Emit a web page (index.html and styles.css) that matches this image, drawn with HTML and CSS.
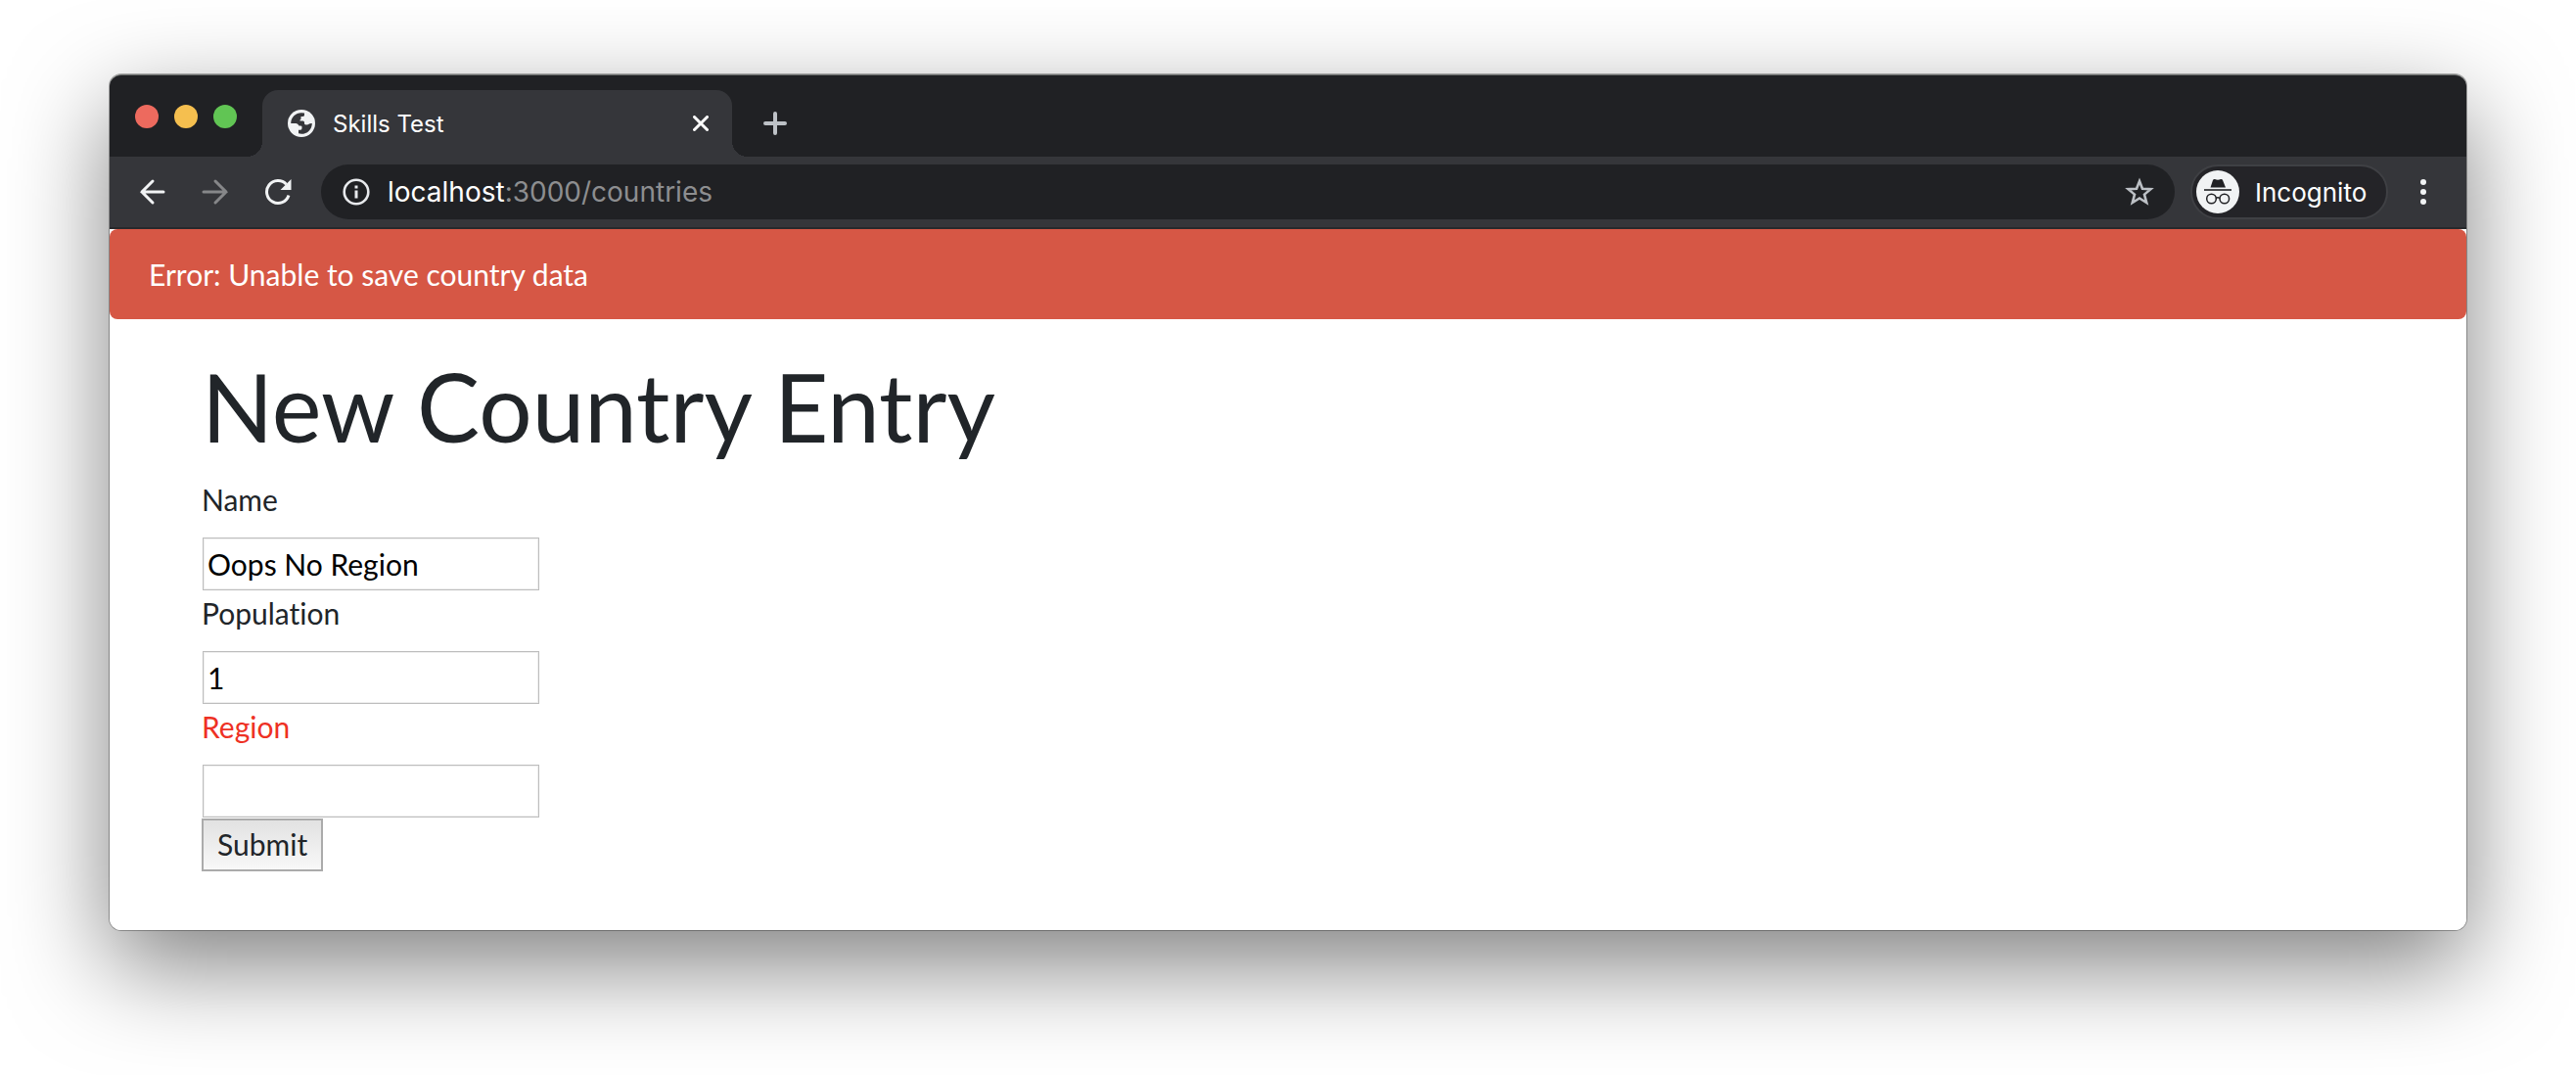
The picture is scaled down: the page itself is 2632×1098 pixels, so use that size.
FILE: index.html
```html
<!DOCTYPE html>
<html lang="en">
<head>
<meta charset="utf-8">
<title>Skills Test</title>
<link rel="stylesheet" href="styles.css">
</head>
<body>
<div class="window">
  <header class="tabstrip">
    <div class="lights">
      <span class="light light-close"></span>
      <span class="light light-min"></span>
      <span class="light light-max"></span>
    </div>
    <div class="tab">
      <svg class="globe" viewBox="0 0 28 28" aria-hidden="true"><circle cx="14" cy="14" r="14" fill="#f1f3f4"/><path d="M3.200 14A10.800 10.800 0 0 1 14 3.200L17 3.600V5.500Q17 7 15 7H13.500V9Q13.500 10 12.500 10.500V11.500H15.500Q17 11.500 17 13V14.500Q17.500 15.500 19 15.500Q21 15.500 22 14.500Q23 13.800 24.800 14A10.800 10.800 0 0 1 14 24.800L11 24.300V20.800H13Q14.500 20.800 14.500 19V17.500Q14.500 16.500 13 16.500H11.500Q10.500 14 8.500 14Z" fill="#35363a"/></svg>
      <span class="tab-title">Skills Test</span>
      <button class="icon-button tab-close" aria-label="Close tab"><svg viewBox="0 0 16 16" width="16" height="16"><path d="M1.500 1.500 14.500 14.500 M14.500 1.500 1.500 14.500" stroke="#fff" stroke-width="3" stroke-linecap="round"/></svg></button>
    </div>
    <button class="icon-button new-tab" aria-label="New tab"><svg viewBox="0 0 24 24" width="24" height="24"><path d="M12 2V22M2 12H22" stroke="#bdc1c6" stroke-width="4" stroke-linecap="round"/></svg></button>
  </header>
  <nav class="toolbar">
    <div class="nav-buttons">
      <button class="icon-button" aria-label="Back"><svg viewBox="0 0 28 28" width="28" height="28"><path d="M25 14H3M14 3 3 14 14 25" fill="none" stroke="#f1f3f4" stroke-width="3" stroke-linecap="round"/></svg></button>
      <button class="icon-button" aria-label="Forward"><svg viewBox="0 0 28 28" width="28" height="28"><path d="M2 14H25M14 3 25 14 14 25" fill="none" stroke="#868789" stroke-width="3" stroke-linecap="round"/></svg></button>
      <button class="icon-button" aria-label="Reload"><svg viewBox="0 0 28 28" width="28" height="28"><path d="M22.500 6.200A11.500 11.500 0 1 0 25 17.500" fill="none" stroke="#f1f3f4" stroke-width="3"/><path d="M27.500 1V12H16.500Z" fill="#f1f3f4"/></svg></button>
    </div>
    <div class="address">
      <svg viewBox="0 0 28 28" width="28" height="28" aria-hidden="true"><circle cx="14" cy="14" r="12.300" fill="none" stroke="#e8eaed" stroke-width="2.600"/><path d="M12.500 7.500h3v3h-3zM12.500 12.500h3v8h-3z" fill="#e8eaed"/></svg>
      <span class="url"><span class="host">localhost</span>:3000/countries</span>
      <button class="icon-button" aria-label="Bookmark"><svg viewBox="0 0 30 30" width="30" height="30"><path d="M15 4 18 11.700 26.500 12.200 20 17.600 22.200 26 15 21.500 7.800 26 10 17.600 3.500 12.200 12 11.700Z" fill="none" stroke="#bdc1c6" stroke-width="2.600"/></svg></button>
    </div>
    <button class="profile">
      <svg viewBox="0 0 44 44" width="44" height="44" aria-hidden="true"><circle cx="22" cy="22" r="22" fill="#f1f3f4"/><path d="M14.500 17.500 17 10Q17.700 8.600 19 9Q22 10.400 25 9Q26.500 8.600 27 10L30 17.500Z" fill="#202124"/><path d="M8 20H36" stroke="#202124" stroke-width="1.600"/><circle cx="15.500" cy="29" r="4.800" fill="none" stroke="#202124" stroke-width="1.500"/><circle cx="28.800" cy="29" r="4.800" fill="none" stroke="#202124" stroke-width="1.500"/><path d="M20 28.500Q22 27 24 28.500" fill="none" stroke="#202124" stroke-width="1.500"/></svg>
      <span>Incognito</span>
    </button>
    <button class="icon-button menu" aria-label="Menu"><svg viewBox="0 0 6 28" width="6" height="28"><g fill="#f1f3f4"><circle cx="3" cy="4" r="3"/><circle cx="3" cy="14" r="3"/><circle cx="3" cy="24" r="3"/></g></svg></button>
  </nav>
  <main class="page">
    <div class="alert" role="alert">Error: Unable to save country data</div>
    <div class="content">
      <h1>New Country Entry</h1>
      <form class="form">
        <label for="name">Name</label>
        <input id="name" type="text" value="Oops No Region">
        <label for="population">Population</label>
        <input id="population" type="text" value="1">
        <label class="invalid" for="region">Region</label>
        <input id="region" type="text">
        <button class="submit" type="button">Submit</button>
      </form>
    </div>
  </main>
</div>
</body>
</html>
```

FILE: styles.css
```css
* { box-sizing: border-box; }

body {
  margin: 0;
  padding: 76px 112px 148px;
  background: #fff;
}

button { font: inherit; }
svg { display: block; flex: none; }

.window {
  border-radius: 12px;
  background: #fff;
  box-shadow: 0 0 0 1px rgba(0, 0, 0, 0.3), 0 36px 100px rgba(0, 0, 0, 0.5);
  font-family: Inter, "Liberation Sans", sans-serif;
}

.tabstrip {
  display: flex;
  height: 84px;
  padding-left: 26px;
  border-top: 1px solid #6f7270;
  border-radius: 12px 12px 0 0;
  background: #202124;
}

.lights {
  display: flex;
  gap: 16px;
  width: 130px;
  padding-top: 30px;
}

.light { width: 24px; height: 24px; border-radius: 50%; }
.light-close { background: #ed6a5e; }
.light-min { background: #f5bf4f; }
.light-max { background: #61c554; }

.tab {
  position: relative;
  display: flex;
  align-items: center;
  gap: 18px;
  width: 480px;
  margin-top: 15px;
  padding: 0 24px 0 26px;
  border-radius: 16px 16px 0 0;
  background: #35363a;
  color: #fff;
  font-size: 24px;
}

.tab::before,
.tab::after {
  content: "";
  position: absolute;
  bottom: 0;
  width: 16px;
  height: 16px;
}

.tab::before {
  left: -16px;
  background: radial-gradient(circle at 0 0, transparent 16px, #35363a 16px);
}

.tab::after {
  right: -16px;
  background: radial-gradient(circle at 100% 0, transparent 16px, #35363a 16px);
}

.globe { width: 28px; height: 28px; }
.tab-title { flex: 1; }

.icon-button {
  display: flex;
  align-items: center;
  justify-content: center;
  padding: 0;
  border: 0;
  background: none;
}

.new-tab { margin: 15px 0 0 32px; }

.toolbar {
  display: flex;
  align-items: center;
  height: 74px;
  padding: 0 41px 0 30px;
  border-bottom: 2px solid #28292c;
  background: #35363a;
  color: #fff;
}

.nav-buttons { display: flex; gap: 36px; width: 186px; }

.address {
  display: flex;
  flex: 1;
  align-items: center;
  gap: 18px;
  height: 56px;
  padding: 0 21px 0 22px;
  border-radius: 28px;
  background: #202124;
  font-size: 28px;
}

.url { flex: 1; color: #8d8e90; }
.host { color: #fff; }

.profile {
  display: flex;
  align-items: center;
  gap: 16px;
  width: 202px;
  height: 56px;
  margin: 0 33px 0 16px;
  padding: 0 4px;
  border: 2px solid #3f4044;
  border-radius: 28px;
  background: #242428;
  color: #fff;
  font-size: 26px;
}

.page {
  border-radius: 0 0 12px 12px;
  background: #fff;
  color: #212529;
  font-family: Lato, sans-serif;
  font-size: 30px;
  font-variant-ligatures: no-common-ligatures;
  line-height: 46px;
}

.alert {
  padding: 23px 40px;
  border-radius: 8px;
  background: #d65745;
  color: #fff;
}

.content { padding: 31px 94px 60px; }

h1 {
  margin: 0 0 15px;
  font-size: 96px;
  font-weight: 400;
  line-height: 115px;
}

.form {
  display: flex;
  flex-direction: column;
  align-items: flex-start;
}

label { margin-bottom: 16px; }
.invalid { color: #ee3124; }

input {
  width: 344px;
  height: 54px;
  margin: 0 1px;
  padding: 0 4px;
  border: 1px solid #bdbdbd;
  border-radius: 0;
  background: #fff;
  box-shadow: inset 0 0 0 1px #efefef;
  color: #000;
  font: inherit;
}

.submit {
  height: 54px;
  margin-top: 1px;
  padding: 0 14px 2px;
  border: 2px solid #ababab;
  background: linear-gradient(#e2e2e2, #f8f8f8);
  color: #212529;
}
```
